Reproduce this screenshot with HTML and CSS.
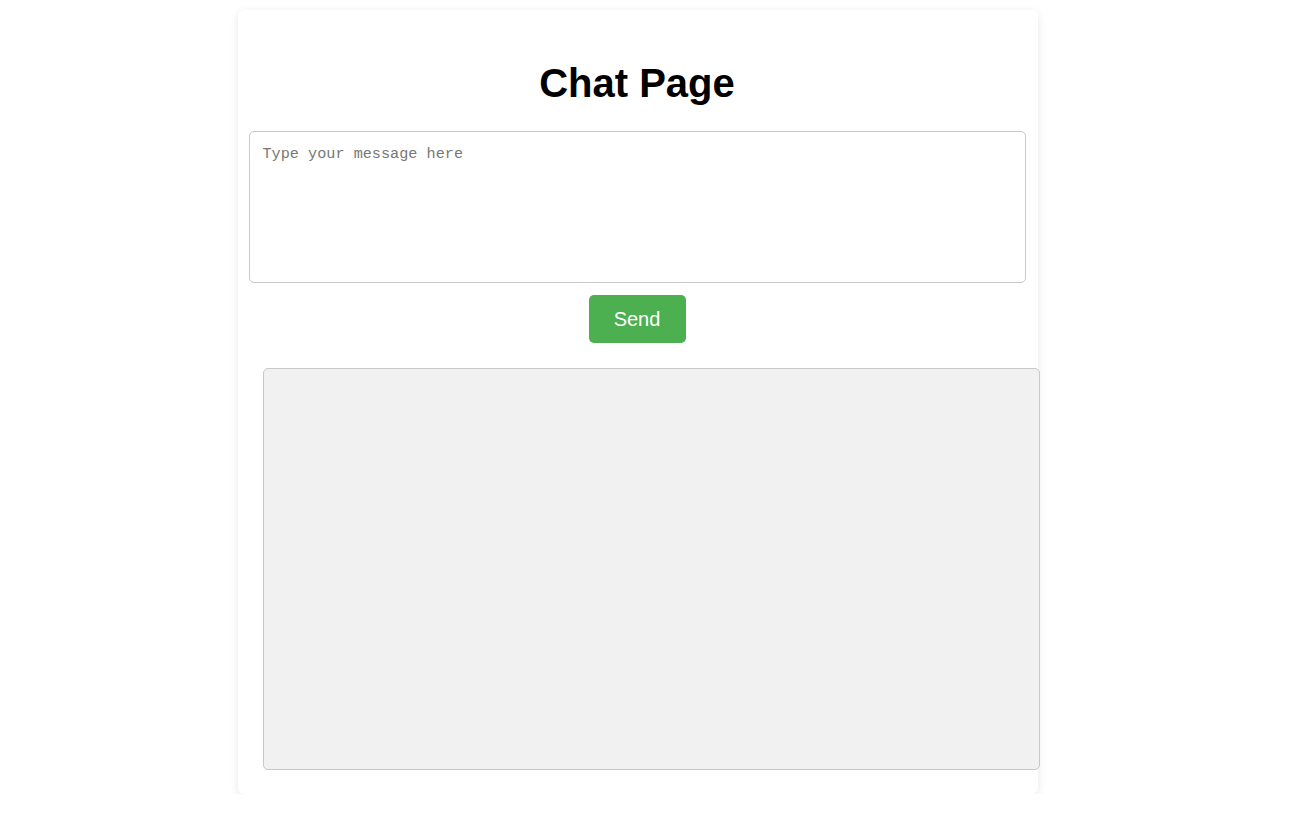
FILE: index.html
```html
<!DOCTYPE html>
<html lang="en">
<head>
<meta charset="utf-8">
<title>Chat Page</title>
<link rel="stylesheet" href="styles.css">
</head>
<body>
<main class="card">
  <h1 class="title">Chat Page</h1>
  <textarea class="message" placeholder="Type your message here"></textarea>
  <div class="actions">
    <button class="send" type="button">Send</button>
  </div>
  <div class="chat-box"></div>
</main>
</body>
</html>
```

FILE: styles.css
```css
html, body {
  margin: 0;
  padding: 0;
  background: #ffffff;
}

body {
  font-family: "Liberation Sans", Arial, sans-serif;
  padding: 10px 15px 0 0;
}

.card {
  width: 800px;
  height: 784px;
  margin: 0 auto;
  box-sizing: border-box;
  background: #ffffff;
  border-radius: 6px;
  box-shadow: 0 2px 8px rgba(0, 0, 0, 0.1);
  padding: 11px 12px 0 11px;
  display: flex;
  flex-direction: column;
}

.title {
  margin: 39px 0 0;
  text-align: center;
  font-size: 40px;
  font-weight: bold;
  line-height: 46px;
  color: #000;
}

.message {
  display: block;
  margin-top: 25px;
  width: 777px;
  height: 152px;
  box-sizing: border-box;
  border: 1px solid #c8c8c8;
  border-radius: 5px;
  padding: 12px 13px;
  font-family: "Liberation Mono", "DejaVu Sans Mono", monospace;
  font-size: 15.2px;
  line-height: 20px;
  color: #333;
  resize: none;
  outline: none;
}

.message::placeholder {
  color: #777;
}

.actions {
  display: flex;
  justify-content: center;
  margin-top: 12px;
}

.send {
  width: 97px;
  height: 48px;
  border: none;
  border-radius: 5px;
  background: #4caf50;
  color: #ffffff;
  font-family: "Liberation Sans", Arial, sans-serif;
  font-size: 20px;
  cursor: pointer;
}

.chat-box {
  margin: 25px 0 0 14px;
  width: 777px;
  height: 402px;
  flex: none;
  box-sizing: border-box;
  background: #f1f1f1;
  border: 1px solid #c8c8c8;
  border-radius: 5px;
}
```
